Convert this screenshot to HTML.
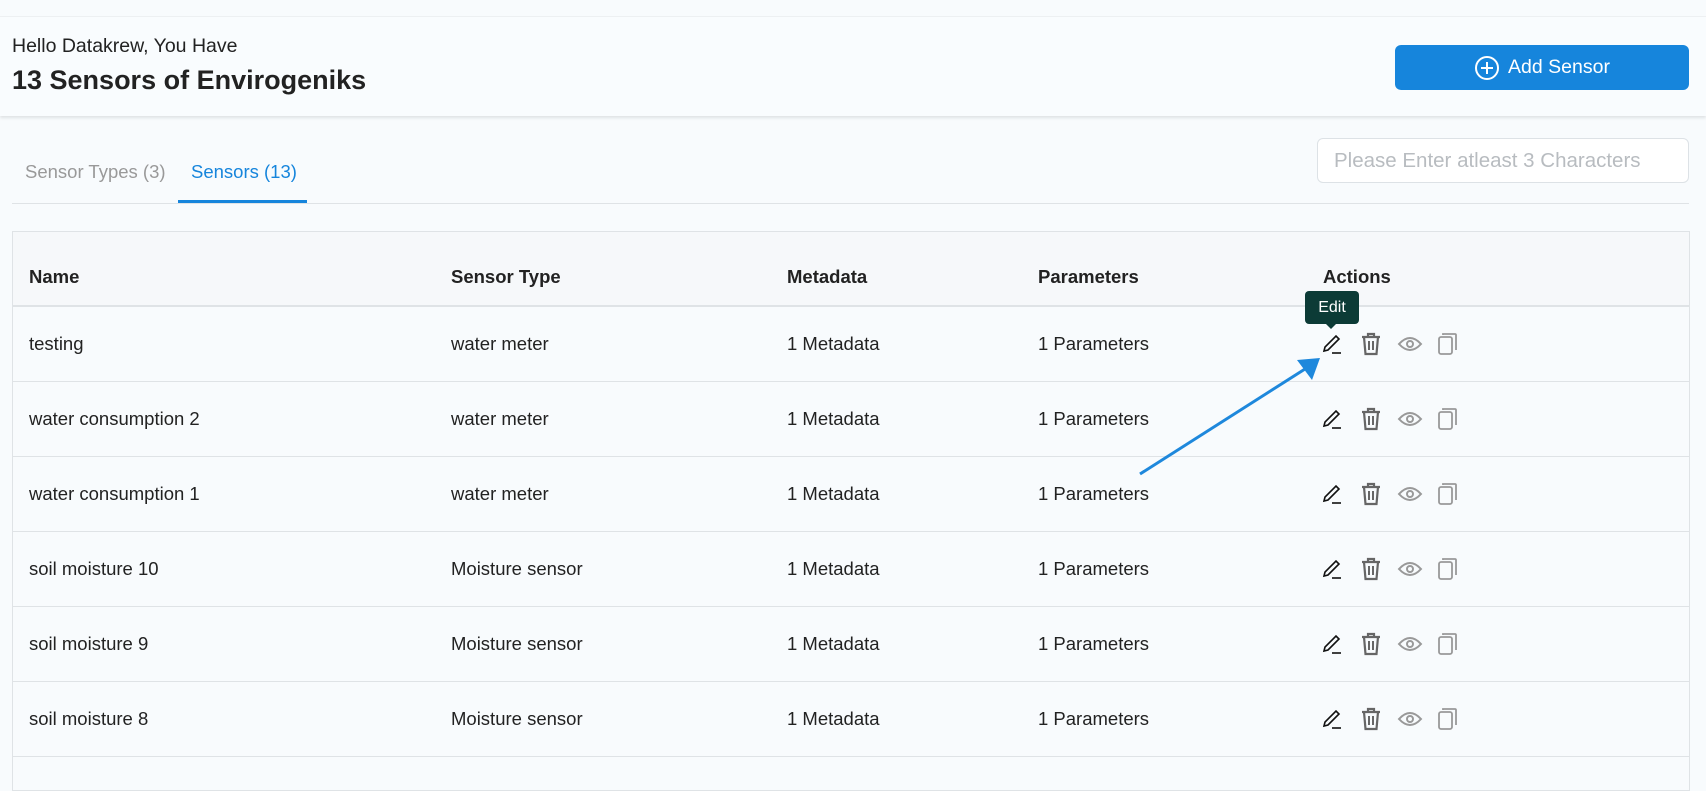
<!DOCTYPE html>
<html><head><style>
*{box-sizing:border-box;margin:0;padding:0}
body{width:1706px;height:743px;overflow:hidden;background:#f8fbfd;font-family:"Liberation Sans",sans-serif;color:#222;position:relative}
.top{position:absolute;left:0;top:0;width:1706px;height:17px;background:#f8fbfd;border-bottom:1px solid #eef1f3}
.header{position:absolute;left:0;top:17px;width:1706px;height:99px;background:#f9fcfe;box-shadow:0 2px 3px rgba(0,0,0,.1)}
.hello{position:absolute;left:12px;font-size:19.5px;color:#222}
.title{position:absolute;left:12px;font-size:27px;font-weight:bold;color:#222}
.btn{position:absolute;left:1395px;top:45px;width:294px;height:45px;background:#1685dc;border-radius:6px;color:#fff;font-size:19.5px;display:flex;align-items:center;justify-content:center;gap:8px}
.tab{position:absolute;top:161px;font-size:18.5px}
.search{position:absolute;left:1317px;top:138px;width:372px;height:45px;border:1px solid #dde2e6;border-radius:6px;background:#fff;color:#b8bcc0;font-size:20.5px;padding:10px 16px}
.tabline{position:absolute;left:12px;top:203px;width:1677px;height:1px;background:#dfe3e6}
.uline{position:absolute;left:178px;top:200px;width:129px;height:3px;background:#1685dc}
.table{position:absolute;left:12px;top:231px;width:1678px;height:560px;border:1px solid #dfe3e6;background:#f8fbfd}
.thead{position:absolute;left:0;top:0;width:100%;height:75px;background:#f6f8fa;border-bottom:2px solid #dfe3e6}
.row{position:absolute;left:0;width:100%;height:75px;border-bottom:1px solid #dfe3e6}
.c{position:absolute;font-size:18.5px;top:50%;transform:translateY(-50%)}
.thead .c{font-weight:bold;top:45px;font-size:18.5px}
.ic{position:absolute;top:50%;transform:translateY(-50%)}
</style></head><body>
<div class="top"></div>
<div class="header">
<div class="hello" style="top:18px">Hello Datakrew, You Have</div>
<div class="title" style="top:48px">13 Sensors of Envirogeniks</div>
</div>
<div class="btn"><svg width="26" height="26" viewBox="0 0 26 26"><circle cx="13" cy="13" r="11" fill="none" stroke="#fff" stroke-width="2"/><path d="M13 7v12M7 13h12" stroke="#fff" stroke-width="2"/></svg>Add Sensor</div>
<div class="tab" style="left:25px;color:#999">Sensor Types (3)</div>
<div class="tab" style="left:191px;color:#1685dc">Sensors (13)</div>
<div class="search">Please Enter atleast 3 Characters</div>
<div class="tabline"></div><div class="uline"></div>
<div class="table">
<div class="thead"><span class="c" style="left:16px">Name</span><span class="c" style="left:438px">Sensor Type</span><span class="c" style="left:774px">Metadata</span><span class="c" style="left:1025px">Parameters</span><span class="c" style="left:1310px">Actions</span></div>
<div id="rows"></div>
</div>
<div style="position:absolute;left:1305px;top:291px;width:54px;height:33px;background:#0c3b36;border-radius:4px;color:#fff;font-size:16px;text-align:center;line-height:33px">Edit</div>
<div style="position:absolute;left:1325px;top:323px;width:0;height:0;border-left:6px solid transparent;border-right:6px solid transparent;border-top:6px solid #0c3b36"></div>
<svg style="position:absolute;left:0;top:0" width="1706" height="743"><line x1="1140" y1="474" x2="1305" y2="369" stroke="#1e88dc" stroke-width="3"/><polygon points="1320,358 1297,360 1312,380" fill="#1e88dc"/></svg>
<script>
const d=[["testing","water meter"],["water consumption 2","water meter"],["water consumption 1","water meter"],["soil moisture 10","Moisture sensor"],["soil moisture 9","Moisture sensor"],["soil moisture 8","Moisture sensor"]];
const icons=`<svg class="ic" style="left:1320px" width="22" height="22" viewBox="0 0 22 22"><path d="M3 18l1-4L15 3l3 3L7 17z" fill="none" stroke="#111" stroke-width="1.6"/><path d="M11 20h9" stroke="#111" stroke-width="1.6"/></svg>
<svg class="ic" style="left:1359px" width="22" height="24" viewBox="0 0 22 24"><path d="M2 5h18M8 5V2h6v3M4 5l1.5 17h11L18 5" fill="none" stroke="#666" stroke-width="2.2"/><path d="M9 9v9M13 9v9" stroke="#666" stroke-width="2"/></svg>
<svg class="ic" style="left:1396px" width="26" height="18" viewBox="0 0 26 18"><path d="M2 9Q13 -3 24 9Q13 21 2 9z" fill="none" stroke="#999" stroke-width="2"/><circle cx="13" cy="9" r="3" fill="none" stroke="#999" stroke-width="2"/></svg>
<svg class="ic" style="left:1436px" width="22" height="24" viewBox="0 0 22 24"><rect x="2" y="5" width="13" height="17" rx="2" fill="none" stroke="#999" stroke-width="1.8"/><path d="M6 3V2h12a1 1 0 0 1 1 1v15" fill="none" stroke="#999" stroke-width="1.8"/></svg>`;
let h="";d.forEach((r,i)=>{h+=`<div class="row" style="top:${75+i*75}px"><span class="c" style="left:16px">${r[0]}</span><span class="c" style="left:438px">${r[1]}</span><span class="c" style="left:774px">1 Metadata</span><span class="c" style="left:1025px">1 Parameters</span>${icons.replace(/left:(\d+)px/g,(m,a)=>'left:'+(a-12)+'px')}</div>`});
document.getElementById('rows').innerHTML=h;
</script>
</body></html>
